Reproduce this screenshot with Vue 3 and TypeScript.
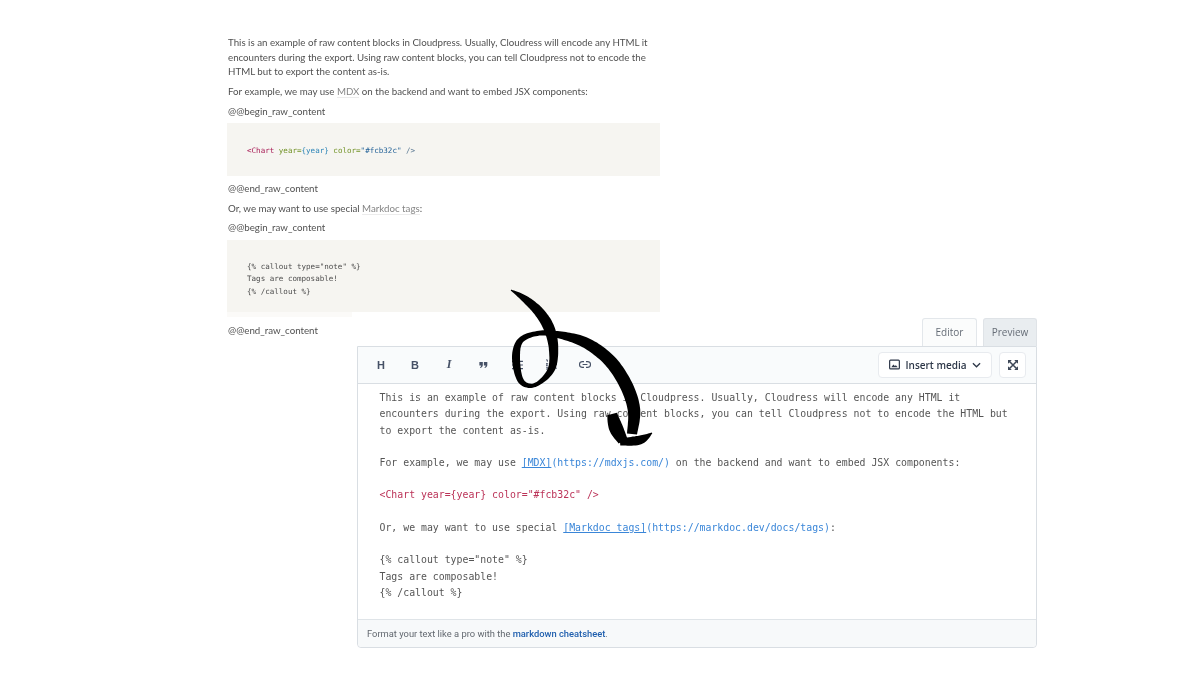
<script setup lang="ts">
type Pt = [number, number, number];

function ribbon(points: Pt[]): string {
  const samples: Pt[] = [];
  const at = (i: number) => points[Math.max(0, Math.min(points.length - 1, i))];
  for (let i = 0; i < points.length - 1; i++) {
    const [p0, p1, p2, p3] = [at(i - 1), at(i), at(i + 1), at(i + 2)];
    for (let s = 0; s < 12; s++) {
      const t = s / 12;
      const c = (k: number) =>
        0.5 * (2 * p1[k] + (p2[k] - p0[k]) * t + (2 * p0[k] - 5 * p1[k] + 4 * p2[k] - p3[k]) * t * t + (3 * p1[k] - p0[k] - 3 * p2[k] + p3[k]) * t * t * t);
      samples.push([c(0), c(1), c(2)]);
    }
  }
  samples.push(points[points.length - 1]);
  const left: string[] = [];
  const right: string[] = [];
  samples.forEach((p, i) => {
    const a = samples[Math.max(0, i - 1)];
    const b = samples[Math.min(samples.length - 1, i + 1)];
    const dx = b[0] - a[0];
    const dy = b[1] - a[1];
    const len = Math.hypot(dx, dy) || 1;
    const nx = (-dy / len) * (p[2] / 2);
    const ny = (dx / len) * (p[2] / 2);
    left.push(`${(p[0] + nx).toFixed(1)} ${(p[1] + ny).toFixed(1)}`);
    right.unshift(`${(p[0] - nx).toFixed(1)} ${(p[1] - ny).toFixed(1)}`);
  });
  return `M${left.join("L")}L${right.join("L")}Z`;
}

const arrowPaths = [
  ribbon([
    [511, 290, 1], [525, 299, 7], [539, 312, 10], [549, 328, 11], [553.5, 348, 9.5], [551, 370, 7], [535, 385, 4],
    [521, 381, 6], [516, 358, 8], [521, 340, 6], [541, 333, 5], [565, 336, 8], [588, 344, 11],
    [610, 361, 12.5], [626, 385, 13], [634, 410, 12.5], [632, 434, 10],
  ]),
  ribbon([[612, 414, 10], [616, 428, 14], [623, 441, 10]]),
  ribbon([[620, 442, 7], [640, 440, 9], [652, 433, 1]]),
];
</script>

<template>
  <main class="page">
    <article class="post">
      <p>This is an example of raw content blocks in Cloudpress. Usually, Cloudress will encode any HTML it encounters during the export. Using raw content blocks, you can tell Cloudpress not to encode the HTML but to export the content as-is.</p>
      <p>For example, we may use <a>MDX</a> on the backend and want to embed JSX components:</p>
      <p>@@begin_raw_content</p>
      <pre class="code"><span class="tag">&lt;Chart</span> <span class="attr">year=</span><span class="val">{year}</span> <span class="attr">color=</span><span class="str">"#fcb32c"</span> <span class="end">/&gt;</span></pre>
      <p>@@end_raw_content</p>
      <p>Or, we may want to use special <a>Markdoc tags</a>:</p>
      <p>@@begin_raw_content</p>
      <pre class="code code-tall">{% callout type="note" %}
Tags are composable!
{% /callout %}</pre>
      <p>@@end_raw_content</p>
    </article>

    <section class="window">
      <div class="tabs">
        <span class="tab">Editor</span>
        <span class="tab tab-active">Preview</span>
      </div>
      <div class="editor">
        <header class="toolbar">
          <span class="tool">H</span>
          <span class="tool">B</span>
          <span class="tool tool-italic">I</span>
          <span class="tool">
            <svg width="9" height="6" viewBox="0 0 11 8"><path d="M0 0h4.600v3.800C4.600 6 3.400 7.400 1.400 8L.8 6.900C1.800 6.500 2.300 5.900 2.400 4.600H0zM6 0h4.600v3.800C10.600 6 9.400 7.400 7.400 8L6.800 6.900C7.800 6.500 8.300 5.900 8.400 4.600H6z" fill="#465166"/></svg>
          </span>
          <span class="tool">
            <svg width="11" height="10" viewBox="0 0 12 11"><path d="M4 1.500h8M4 5.500h8M4 9.500h8M0 1.500h2M0 5.500h2M0 9.500h2" stroke="#465166" stroke-width="1.300"/></svg>
          </span>
          <span class="tool">
            <svg width="11" height="11" viewBox="0 0 12 12"><path d="M4 2h8M4 6h8M4 10h8M0 1h1.500v2M0 5h2L0 7h2M0 9h2v2H0" fill="none" stroke="#465166" stroke-width="1"/></svg>
          </span>
          <span class="tool">
            <svg width="12" height="7" viewBox="0 0 12 7"><path d="M5 .6H3.400a2.900 2.900 0 0 0 0 5.800H5M7 .6h1.600a2.900 2.900 0 0 1 0 5.800H7M3.600 3.500h4.800" fill="none" stroke="#465166" stroke-width="1.100"/></svg>
          </span>
          <span class="spacer"></span>
          <button class="btn btn-media" type="button">
            <svg width="11" height="11" viewBox="0 0 12 12"><rect x=".7" y="1.200" width="10.600" height="9.600" rx="1" fill="none" stroke="#2d3748" stroke-width="1.300"/><path d="M2.500 9l2.300-3 1.500 1.700 1.200-1L9.500 9z" fill="#2d3748"/></svg>
            <span>Insert media</span>
            <svg width="9" height="6" viewBox="0 0 10 6"><path d="M1 1l4 4 4-4" fill="none" stroke="#2d3748" stroke-width="1.400"/></svg>
          </button>
          <button class="btn btn-full" type="button" aria-label="Fullscreen">
            <svg width="10" height="10" viewBox="0 0 10 10"><path d="M1.500 1.500l7 7M8.500 1.500l-7 7" stroke="#3d4757" stroke-width="1.500"/><path d="M0 0h3.800L0 3.800zM10 0v3.800L6.200 0zM0 10V6.200L3.800 10zM10 10H6.200L10 6.200z" fill="#3d4757"/></svg>
          </button>
        </header>
        <pre class="source">This is an example of raw content blocks in Cloudpress. Usually, Cloudress will encode any HTML it
encounters during the export. Using raw content blocks, you can tell Cloudpress not to encode the HTML but
to export the content as-is.

For example, we may use <span class="md-link"><u>[MDX]</u>(https://mdxjs.com/)</span> on the backend and want to embed JSX components:

<span class="md-html">&lt;Chart year={year} color="#fcb32c" /&gt;</span>

Or, we may want to use special <span class="md-link"><u>[Markdoc tags]</u>(https://markdoc.dev/docs/tags)</span>:

{% callout type="note" %}
Tags are composable!
{% /callout %}</pre>
        <footer class="hint">Format your text like a pro with the <a>markdown cheatsheet</a>.</footer>
      </div>
    </section>

    <svg class="arrow" width="1200" height="675" viewBox="0 0 1200 675" aria-hidden="true">
      <path v-for="(d, i) in arrowPaths" :key="i" :d="d" fill="#000" />
    </svg>
  </main>
</template>

<style>
html, body { margin: 0; background: #fff; }
</style>

<style scoped>
.page {
  position: relative;
  width: 1200px;
  height: 675px;
  overflow: hidden;
  background: #fff;
  font-family: Lato, "Open Sans", sans-serif;
  filter: blur(0.3px);
}
.post {
  width: 432px;
  margin-left: 228px;
  padding-top: 35.200px;
  font-size: 9.720px;
  line-height: 14.600px;
  color: #505050;
}
.post p { margin: 0 0 5px; }
.post a { color: #858585; border-bottom: 1px solid #ececec; }
.code {
  position: relative;
  margin: 0 0 5px -1px;
  padding: 21.500px 20px 19px;
  background: #f6f5f1;
  font-family: "DejaVu Sans Mono", monospace;
  font-size: 7.550px;
  line-height: 12.500px;
  color: #4d4d4d;
}
.code-tall { margin-bottom: 11px; padding: 21px 20px 13.500px; }
.code-tall::after {
  content: "";
  position: absolute;
  top: 100%;
  left: 0;
  width: 125px;
  height: 5px;
  background: #fbfaf8;
}
.tag { color: #a81c56; }
.attr { color: #74942a; }
.val { color: #2f86b8; }
.str { color: #1f5f96; }
.end { color: #5d7a94; }
.window {
  width: 680px;
  margin: -25px 0 0 357px;
  font-family: "Open Sans", sans-serif;
}
.tabs { display: flex; justify-content: flex-end; gap: 6px; height: 28px; }
.tab {
  display: flex;
  align-items: center;
  justify-content: center;
  width: 52px;
  border: 1px solid #e3e7eb;
  border-bottom: 0;
  border-radius: 3px 3px 0 0;
  background: #fbfcfc;
  font-size: 10px;
  color: #666d77;
}
.tab:first-child { width: 53px; }
.tab-active { background: #e9edf0; border-color: #dfe3e7; }
.editor {
  box-sizing: border-box;
  height: 302px;
  border: 1px solid #d9dee3;
  border-radius: 0 0 4px 4px;
  display: flex;
  flex-direction: column;
  background: #fff;
}
.toolbar {
  display: flex;
  align-items: center;
  box-sizing: border-box;
  height: 37px;
  flex: none;
  padding: 0 10px 0 6px;
  background: #f9fbfc;
  border-bottom: 1px solid #d9dee3;
}
.tool {
  display: flex;
  align-items: center;
  justify-content: center;
  width: 34px;
  font-family: "Liberation Sans", sans-serif;
  font-size: 11px;
  font-weight: 700;
  color: #465166;
}
.tool-italic { font-family: "Liberation Serif", serif; font-style: italic; font-size: 12px; }
.spacer { flex: 1; }
.btn {
  display: flex;
  align-items: center;
  justify-content: center;
  box-sizing: border-box;
  height: 26px;
  padding: 0;
  border: 1px solid #e8ebef;
  border-radius: 4px;
  background: #fff;
  font: 600 10px "Open Sans", sans-serif;
  color: #2d3748;
}
.btn-media { width: 114px; gap: 5px; }
.btn-full { width: 27px; margin-left: 7px; }
.source {
  flex: 1;
  margin: 0;
  padding: 6.500px 21px 0 21.500px;
  font-family: "DejaVu Sans Mono", monospace;
  font-size: 9.850px;
  line-height: 16.230px;
  color: #555;
  white-space: pre;
}
.md-link { color: #3a86d8; }
.md-html { color: #bb3358; }
.hint {
  flex: none;
  box-sizing: border-box;
  height: 28px;
  display: flex;
  align-items: center;
  white-space: pre-wrap;
  padding-left: 9px;
  background: #f7f9fa;
  border-top: 1px solid #dfe4e8;
  border-radius: 0 0 4px 4px;
  font-family: Roboto, sans-serif;
  font-size: 9.350px;
  color: #62686f;
}
.hint a { color: #1f5fae; font-weight: 500; }
.arrow { position: absolute; top: 0; left: 0; pointer-events: none; }
</style>
